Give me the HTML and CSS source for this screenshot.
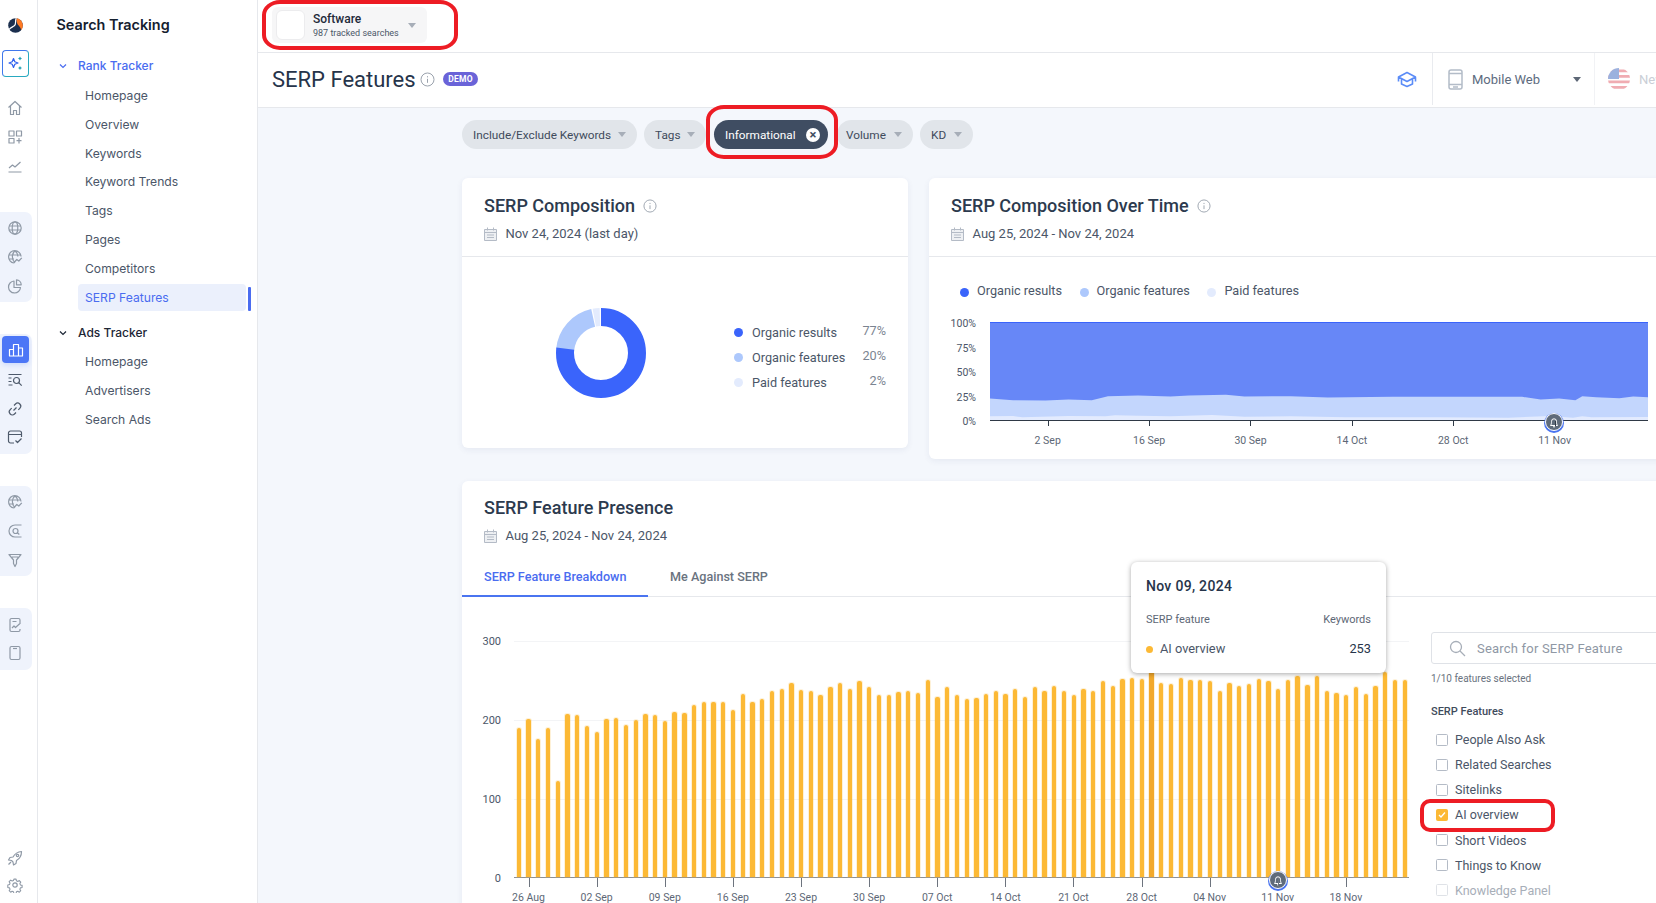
FILE: index.html
```html
<!DOCTYPE html>
<html lang="en">
<head>
    <meta charset="UTF-8">
    <meta name="viewport" content="width=device-width, initial-scale=1.0">
    <title>SERP Features</title>
    <link rel="stylesheet" href="styles.css">
</head>
<body>
    <aside class="rail">
        <div class="rail-logo">
            <svg width="15" height="15" viewBox="0 0 15 15"><circle cx="7.500" cy="7.500" r="7.300" fill="#1b2f4e"/><path d="M8.500 .3A7.300 7.300 0 0 1 13 12.300C13 9 10.500 8 9.500 6 8.800 4.500 8.300 2.500 8.500 .3z" fill="#ff7a24"/><path d="M8.200 .3C6.500 4 9 6 6 8 4.500 9 2 10 1.100 11.500" fill="none" stroke="#fff" stroke-width="1.200"/></svg>
        </div>
        <div class="rail-ai">
            <svg width="17" height="17" viewBox="0 0 17 17"><path d="M6.500 3.500l1.300 3.200 3.200 1.300-3.200 1.300-1.300 3.200-1.300-3.200L2 8l3.200-1.300z" fill="none" stroke="#2f62ee" stroke-width="1.200" stroke-linejoin="round"/><path d="M13 1.500l.7 1.300 1.300.7-1.300.7-.7 1.300-.7-1.300-1.300-.7 1.300-.7zM13 11l.7 1.300 1.300.7-1.300.7-.7 1.300-.7-1.300-1.300-.7 1.300-.7z" fill="#1f9fb4"/></svg>
        </div>
        <div class="rail-plain">
            <div class="rail-item"><svg class="rail-icon" viewBox="0 0 16 16"><path d="M1.500 7.500L8 1.500l6.500 6M3.500 6v8.500h3v-4h3v4h3V6"/></svg></div>
            <div class="rail-item"><svg class="rail-icon" viewBox="0 0 16 16"><path d="M2 2h5v5H2zM9.500 2h5v5h-5zM2 9.500h5v4.500H2zM12 9v5.500M9.500 11.700h5"/></svg></div>
            <div class="rail-item"><svg class="rail-icon" viewBox="0 0 16 16"><path d="M2 10l3.500-3 2.500 2 5.500-5M1.500 14h13"/></svg></div>
        </div>
        <div class="rail-group rail-group-first">
            <div class="rail-item"><svg class="rail-icon" viewBox="0 0 16 16"><circle cx="8" cy="8" r="6.200"/><ellipse cx="8" cy="8" rx="2.800" ry="6.200"/><path d="M2 6h12M2 10h12"/></svg></div>
            <div class="rail-item"><svg class="rail-icon" viewBox="0 0 16 16"><path d="M14 7.500A6.200 6.200 0 1 0 7 14M2 6h12M2 10h5M8 1.800c-3.500 3-3.500 9 0 12.200M8 1.800c2 1.800 2.800 4 2.800 5.700M7.500 13l2.300-2.500 2 1.500 3-3.200"/></svg></div>
            <div class="rail-item"><svg class="rail-icon" viewBox="0 0 16 16"><path d="M7 3a6 6 0 1 0 6.500 6.500H7zM9.500 1.800a5 5 0 0 1 4.700 5H9.500z"/></svg></div>
        </div>
        <div class="rail-group">
            <div class="rail-item rail-active"><svg class="rail-icon" viewBox="0 0 16 16"><path d="M1.500 14V7.500h4V14M5.500 14V2.500h5V14M10.500 14V6h4v8M1 14h14"/></svg></div>
            <div class="rail-item"><svg class="rail-icon dark" viewBox="0 0 16 16"><path d="M1.500 2.500h13M1.500 6h3M1.500 9.500h3M1.500 13h4"/><circle cx="9.500" cy="8.500" r="3"/><path d="M11.700 10.700l3 3"/></svg></div>
            <div class="rail-item"><svg class="rail-icon dark" viewBox="0 0 16 16"><path d="M6.500 9.500l3-3M7 4.500l1.500-1.500a3 3 0 0 1 4.300 4.300L11.300 8.800M9 11.500l-1.500 1.500a3 3 0 0 1-4.300-4.300l1.500-1.500"/></svg></div>
            <div class="rail-item"><svg class="rail-icon dark" viewBox="0 0 16 16"><path d="M7 14H3.500a2 2 0 0 1-2-2V4a2 2 0 0 1 2-2h9a2 2 0 0 1 2 2v4M1.500 5.500h13M8.500 11.500l2 2 4-4"/></svg></div>
        </div>
        <div class="rail-group">
            <div class="rail-item"><svg class="rail-icon" viewBox="0 0 16 16"><path d="M14 7.500A6.200 6.200 0 1 0 7 14M2 6h12M2 10h5M8 1.800c-3.500 3-3.500 9 0 12.200M8 1.800c2 1.800 2.800 4 2.800 5.700M7.500 13l2.300-2.500 2 1.500 3-3.200"/></svg></div>
            <div class="rail-item"><svg class="rail-icon" viewBox="0 0 16 16"><path d="M14.500 2H8a6 6 0 0 0 0 12h6.500"/><circle cx="8.500" cy="8" r="2.500"/><path d="M10.300 9.800l2 1.700"/></svg></div>
            <div class="rail-item"><svg class="rail-icon" viewBox="0 0 16 16"><path d="M2 2.500h12L9.500 8v3.500L8 14.500 6.500 11.500V8zM5 5h6"/></svg></div>
        </div>
        <div class="rail-group">
            <div class="rail-item"><svg class="rail-icon" viewBox="0 0 16 16"><path d="M13 7V3a1.500 1.500 0 0 0-1.500-1.500h-7A1.500 1.500 0 0 0 3 3v10a1.500 1.500 0 0 0 1.500 1.500h7A1.500 1.500 0 0 0 13 13v-1M5.500 4.500h4M5 11l2-2 1.500 1.500 5-4.500"/></svg></div>
            <div class="rail-item"><svg class="rail-icon" viewBox="0 0 16 16"><rect x="3" y="1.500" width="10" height="13" rx="1.500"/><path d="M6 3.500h4"/></svg></div>
        </div>
        <div class="rail-bottom">
            <div class="rail-item"><svg class="rail-icon" viewBox="0 0 16 16"><path d="M14.500 1.500c-4 .3-6.500 2-8.500 5.500L3 7.500 1.500 10l3 .5 1.500 1.500.5 3L9 13.500l.5-3c3.500-2 5-4.500 5-9zM4 12l-2.500 2.500"/><circle cx="10.500" cy="5.500" r="1.200"/></svg></div>
            <div class="rail-item"><svg class="rail-icon" viewBox="0 0 16 16"><circle cx="8" cy="8" r="2.200"/><path d="M6.800 1.500h2.400l.4 1.900 1.500.7 1.700-1 1.600 1.700-1 1.600.6 1.500 1.900.5v2.300l-1.900.5-.6 1.500 1 1.600-1.600 1.700-1.700-1-1.500.6-.4 1.900H6.800l-.5-1.900-1.500-.6-1.600 1-1.700-1.700 1-1.600-.6-1.500-1.900-.5V7.900l1.900-.5.600-1.500-1-1.600 1.700-1.700 1.600 1 1.500-.7z" transform="translate(.8 .8) scale(.9)"/></svg></div>
        </div>
    </aside>

    <nav class="side-nav">
        <div class="side-title">Search Tracking</div>
        <div class="nav-group nav-group-open">
            <svg class="nav-chevron" width="10" height="10" viewBox="0 0 10 10"><path d="M2 3.500l3 3 3-3"/></svg>
            Rank Tracker
        </div>
        <ul class="nav-list">
            <li>Homepage</li>
            <li>Overview</li>
            <li>Keywords</li>
            <li>Keyword Trends</li>
            <li>Tags</li>
            <li>Pages</li>
            <li>Competitors</li>
            <li class="nav-current">SERP Features</li>
        </ul>
        <div class="nav-group nav-group-ads">
            <svg class="nav-chevron" width="10" height="10" viewBox="0 0 10 10"><path d="M2 3.500l3 3 3-3"/></svg>
            Ads Tracker
        </div>
        <ul class="nav-list">
            <li>Homepage</li>
            <li>Advertisers</li>
            <li>Search Ads</li>
        </ul>
    </nav>

    <main class="main">
        <header class="top-bar">
            <div class="picker">
                <div class="picker-thumb"></div>
                <div class="picker-text">
                    <div class="picker-name">Software</div>
                    <div class="picker-sub">987 tracked searches</div>
                </div>
                <span class="caret caret-picker"></span>
            </div>
        </header>

        <div class="title-bar">
            <h1>SERP Features</h1>
            <svg class="info-icon" width="15" height="15" viewBox="0 0 15 15"><circle cx="7.500" cy="7.500" r="6.500"/><path d="M7.500 6.800v4M7.500 4.200v1.200"/></svg>
            <span class="demo-badge">DEMO</span>
            <div class="title-tools">
                <svg class="cap-icon" width="20" height="20" viewBox="0 0 20 20"><path d="M10 3.500L1.500 8l8.500 4.500L18.500 8zM4.500 10v5l5.500 2.500 5.500-2.500v-5M1.500 8v4.500M18.500 8v4.500"/></svg>
                <div class="tool-cell device-cell">
                    <svg class="phone-icon" width="15" height="21" viewBox="0 0 15 21"><rect x="1" y="1" width="13" height="19" rx="2"/><path d="M1 4.500h13M1 15.500h13M5 18h5"/></svg>
                    <span class="device-name">Mobile Web</span>
                    <span class="caret caret-device"></span>
                </div>
                <div class="tool-cell country-cell">
                    <svg class="flag" width="22" height="22" viewBox="0 0 22 22"><defs><clipPath id="flag-clip"><circle cx="11" cy="11" r="11"/></clipPath></defs><g clip-path="url(#flag-clip)"><rect width="22" height="22" fill="#fff"/><path d="M0 1.500h22v2.800H0zM0 7h22v2.800H0zM0 12.500h22v2.800H0zM0 18h22v2.800H0z" fill="#e56a75"/><rect width="11" height="11" fill="#4d72c4"/></g></svg>
                    <span class="country-name">New York</span>
                </div>
            </div>
        </div>

        <div class="content">
            <div class="filters">
                <button class="pill pill-include">Include/Exclude Keywords<span class="caret"></span></button>
                <button class="pill pill-tags">Tags<span class="caret"></span></button>
                <button class="pill pill-active">Informational<span class="pill-close">×</span></button>
                <button class="pill pill-volume">Volume<span class="caret"></span></button>
                <button class="pill pill-kd">KD<span class="caret"></span></button>
            </div>

            <div class="card-row">
                <section class="card card-donut">
                    <div class="card-head">
                        <h2>SERP Composition <svg class="info-icon" width="14" height="14" viewBox="0 0 15 15"><circle cx="7.500" cy="7.500" r="6.500"/><path d="M7.500 6.800v4M7.500 4.200v1.200"/></svg></h2>
                        <div class="card-date">
                            <svg class="cal-icon" width="13" height="14" viewBox="0 0 13 14"><path d="M.5 2.500h12v11H.5zM.5 5.500h12M3.500 .5v3M9.500 .5v3M3 8h7M3 10.500h7"/></svg>
                            Nov 24, 2024 (last day)
                        </div>
                    </div>
                    <div class="donut-body">
                        <svg class="donut" width="92" height="92" viewBox="0 0 92 92">
                            <circle class="ring ring-paid" cx="46" cy="46" r="36" pathLength="100" stroke-dasharray="2.500 97.500" stroke-dashoffset="3"/>
                            <circle class="ring ring-features" cx="46" cy="46" r="36" pathLength="100" stroke-dasharray="20 80" stroke-dashoffset="23.500"/>
                            <circle class="ring ring-organic" cx="46" cy="46" r="36" pathLength="100" stroke-dasharray="77 23" stroke-dashoffset="100"/>
                        </svg>
                        <div class="donut-legend">
                            <span class="dot dot-organic"></span><span>Organic results</span><span class="pct">77%</span>
                            <span class="dot dot-features"></span><span>Organic features</span><span class="pct">20%</span>
                            <span class="dot dot-paid"></span><span>Paid features</span><span class="pct">2%</span>
                        </div>
                    </div>
                </section>

                <section class="card card-time">
                    <div class="card-head">
                        <h2>SERP Composition Over Time <svg class="info-icon" width="14" height="14" viewBox="0 0 15 15"><circle cx="7.500" cy="7.500" r="6.500"/><path d="M7.500 6.800v4M7.500 4.200v1.200"/></svg></h2>
                        <div class="card-date">
                            <svg class="cal-icon" width="13" height="14" viewBox="0 0 13 14"><path d="M.5 2.500h12v11H.5zM.5 5.500h12M3.500 .5v3M9.500 .5v3M3 8h7M3 10.500h7"/></svg>
                            Aug 25, 2024 - Nov 24, 2024
                        </div>
                    </div>
                    <div class="time-legend">
                        <span class="legend-item"><span class="dot dot-organic"></span>Organic results</span>
                        <span class="legend-item"><span class="dot dot-features"></span>Organic features</span>
                        <span class="legend-item"><span class="dot dot-paid"></span>Paid features</span>
                    </div>
                    <div class="area-chart">
                        <div class="area-y"><span>100%</span><span>75%</span><span>50%</span><span>25%</span><span>0%</span></div>
                        <div class="area-plot">
                            <svg class="area-svg" viewBox="130 427 1422 293" preserveAspectRatio="none">
                                <rect x="130" y="427" width="1422" height="293" fill="#6787f7"/>
                                <path fill="#c3d6fd" d="M130 655L180 660 250 661 300 658 350 660 385 648 450 646 520 649 560 646 640 644 680 649 780 648 860 652 1000 650 1170 650 1280 650 1320 658 1360 655 1395 660 1410 648 1440 651 1490 654 1520 649 1552 651V720H130z"/>
                                <path fill="#e3ebfe" d="M130 709L180 708 200 712 300 708 380 709 400 706 450 707 520 709 610 705 680 710 780 709 900 712 1100 712 1250 713 1340 708 1390 713 1410 709 1430 712 1552 711V720H130z"/>
                            </svg>
                            <div class="bell-marker bell-area">
                                <svg width="12" height="12" viewBox="0 0 12 12"><path d="M2.500 9.500c.8-1 1-2.200 1-4.200a2.500 2.500 0 0 1 5 0c0 2 .2 3.200 1 4.200zM5 10.800h2"/></svg>
                            </div>
                        </div>
                        <div class="area-x"><span>2 Sep</span><span>16 Sep</span><span>30 Sep</span><span>14 Oct</span><span>28 Oct</span><span>11 Nov</span></div>
                    </div>
                </section>
            </div>

            <section class="card card-presence">
                <div class="card-head card-head-flat">
                    <h2>SERP Feature Presence</h2>
                    <div class="card-date">
                        <svg class="cal-icon" width="13" height="14" viewBox="0 0 13 14"><path d="M.5 2.500h12v11H.5zM.5 5.500h12M3.500 .5v3M9.500 .5v3M3 8h7M3 10.500h7"/></svg>
                        Aug 25, 2024 - Nov 24, 2024
                    </div>
                </div>
                <div class="tabs">
                    <div class="tab tab-current">SERP Feature Breakdown</div>
                    <div class="tab">Me Against SERP</div>
                </div>
                <div class="presence-body">
                    <div class="bar-chart">
                        <div class="bar-y"><span>300</span><span>200</span><span>100</span><span>0</span></div>
                        <div class="bar-plot">
                            <div class="bars" id="bars"></div>
                            <div class="bell-marker bell-bars">
                                <svg width="12" height="12" viewBox="0 0 12 12"><path d="M2.500 9.500c.8-1 1-2.200 1-4.200a2.500 2.500 0 0 1 5 0c0 2 .2 3.200 1 4.200zM5 10.800h2"/></svg>
                            </div>
                            <div class="tooltip">
                                <div class="tooltip-date">Nov 09, 2024</div>
                                <div class="tooltip-head"><span>SERP feature</span><span>Keywords</span></div>
                                <div class="tooltip-row">
                                    <span class="tooltip-name"><span class="dot dot-amber"></span>AI overview</span>
                                    <span class="tooltip-value">253</span>
                                </div>
                            </div>
                            <div class="bar-x" id="barLabels"></div>
                        </div>
                    </div>

                    <div class="feature-panel">
                        <div class="feature-search">
                            <svg width="17" height="17" viewBox="0 0 17 17"><circle cx="7" cy="7" r="5.500"/><path d="M11 11l5 5"/></svg>
                            Search for SERP Feature
                        </div>
                        <div class="feature-count">1/10 features selected</div>
                        <div class="feature-title">SERP Features</div>
                        <ul class="feature-list">
                            <li><span class="check"></span>People Also Ask</li>
                            <li><span class="check"></span>Related Searches</li>
                            <li><span class="check"></span>Sitelinks</li>
                            <li><span class="check check-on"><svg width="10" height="10" viewBox="0 0 10 10"><path d="M2 5l2 2 4-4.500"/></svg></span>AI overview</li>
                            <li><span class="check"></span>Short Videos</li>
                            <li><span class="check"></span>Things to Know</li>
                            <li class="feature-faded"><span class="check"></span>Knowledge Panel</li>
                        </ul>
                    </div>
                </div>
            </section>
        </div>
    </main>

    <div class="red-mark mark-picker"></div>
    <div class="red-mark mark-pill"></div>
    <div class="red-mark mark-feature"></div>

    <script src="chart.js"></script>
</body>
</html>
```
FILE: styles.css
```css
* {
    box-sizing: border-box;
}

html,
body {
    height: 903px;
    margin: 0;
    overflow: hidden;
}

body {
    display: flex;
    width: 1656px;
    font-family: Roboto, "Liberation Sans", sans-serif;
    color: #2c3a4e;
    background-color: #fff;
}

h1,
h2,
ul {
    margin: 0;
    padding: 0;
}

ul {
    list-style: none;
}

/* icon rail */
.rail {
    display: flex;
    flex-direction: column;
    flex: none;
    width: 38px;
    height: 903px;
    padding-top: 16px;
    border-right: 1px solid #e6e8ec;
}

.rail-logo {
    display: flex;
    align-items: center;
    justify-content: center;
    width: 30px;
    height: 18px;
}

.rail-ai {
    display: flex;
    align-items: center;
    justify-content: center;
    width: 27px;
    height: 27px;
    margin: 16px 0 0 2px;
    border: 1px solid #3f78ec;
    border-right-color: #29a9c0;
    border-bottom-color: #29a9c0;
    border-radius: 4px;
}

.rail-plain {
    margin-top: 17px;
}

.rail-group {
    width: 32px;
    margin-top: 32px;
    padding: 2px 0;
    border-radius: 0 7px 7px 0;
    background-color: #eff3fc;
}

.rail-group-first {
    margin-top: 31.600px;
}

.rail-bottom {
    margin-top: auto;
    padding-bottom: 5px;
}

.rail-bottom .rail-item {
    height: 27px;
}

.rail-item {
    display: flex;
    align-items: center;
    justify-content: center;
    width: 30px;
    height: 28.800px;
}

.rail-group .rail-active {
    width: 27px;
    height: 27px;
    margin: 0 0 2px 2px;
    border-radius: 4px;
    background-color: #4c76f6;
    box-shadow: 0 2px 5px rgba(76, 118, 246, 0.2);
}

.rail-icon {
    width: 16px;
    height: 16px;
    fill: none;
    stroke: #8f99a6;
    stroke-width: 1.2;
    stroke-linejoin: round;
}

.rail-icon.dark {
    stroke: #4e5a6b;
}

.rail-active .rail-icon {
    stroke: #fff;
}

/* second column */
.side-nav {
    flex: none;
    width: 220px;
    height: 903px;
    padding-left: 20px;
    border-right: 1px solid #e6e8ec;
    font-family: Inter, Roboto, sans-serif;
    font-size: 12.150px;
}

.side-title {
    height: 52px;
    margin-left: -1.500px;
    padding-top: 16px;
    font-size: 14.400px;
    font-weight: 600;
    line-height: 18px;
    color: #15202f;
}

.nav-group {
    display: flex;
    align-items: center;
    gap: 10px;
    height: 27px;
    font-size: 12px;
    font-weight: 500;
    color: #1c2635;
}

.nav-chevron {
    fill: none;
    stroke: #1c2635;
    stroke-width: 1.200;
}

.nav-group-open {
    margin-bottom: 3px;
    color: #4a6cf0;
}

.nav-group-open .nav-chevron {
    stroke: #4a6cf0;
}

.nav-group-ads {
    margin-top: 8.500px;
    margin-bottom: 2px;
}

.nav-list li {
    position: relative;
    width: 168px;
    height: 27px;
    margin: 0 0 1.800px 20px;
    padding-left: 7px;
    border-radius: 4px;
    line-height: 27px;
    color: #4b5668;
}

.nav-list .nav-current {
    background-color: #ebf0fc;
    color: #4a6cf0;
}

.nav-current::after {
    content: "";
    position: absolute;
    top: 3px;
    right: -5px;
    width: 3px;
    height: 24px;
    border-radius: 1px;
    background-color: #4a6cf0;
}

/* main column */
.main {
    flex: none;
    width: 1398px;
    height: 903px;
    overflow: hidden;
}

.top-bar {
    height: 53px;
    padding: 7px 0 0 14px;
    border-bottom: 1px solid #e6e8ec;
}

.picker {
    display: flex;
    align-items: center;
    width: 155px;
    height: 36px;
    padding-left: 4px;
    border-radius: 6px;
    background-color: #f6f6f7;
}

.picker-thumb {
    flex: none;
    width: 29px;
    height: 30px;
    margin-right: 8px;
    border: 1px solid #ececee;
    border-radius: 6px;
    background-color: #fff;
}

.picker-name {
    padding-top: 1px;
    font-size: 12px;
    font-weight: 500;
    line-height: 15px;
    color: #1f2a3a;
}

.picker-sub {
    font-size: 9px;
    line-height: 12px;
    color: #4b5668;
}

.caret {
    display: inline-block;
    width: 0;
    height: 0;
    border-top: 5px solid #a7aeb8;
    border-right: 4.500px solid transparent;
    border-left: 4.500px solid transparent;
}

.caret-picker {
    margin-left: 9px;
}

.title-bar {
    display: flex;
    align-items: center;
    height: 55px;
    padding: 0 0 2px 14px;
    border-bottom: 1px solid #e6e8ec;
}

h1 {
    font-size: 22px;
    font-weight: 400;
    color: #26344a;
}

.info-icon {
    fill: none;
    stroke: #9aa2ad;
    stroke-width: 1;
}

.title-bar .info-icon {
    margin-left: 4px;
}

.demo-badge {
    margin-left: 8px;
    padding: 0 5.500px;
    border-radius: 7px;
    background-color: #6a63d8;
    font-size: 8.500px;
    font-weight: 700;
    line-height: 14px;
    letter-spacing: 0.3px;
    color: #fff;
}

.title-tools {
    display: flex;
    align-items: center;
    height: 100%;
    margin-left: auto;
}

.cap-icon {
    margin-right: 15px;
    fill: none;
    stroke: #5b8cf7;
    stroke-width: 1.600;
    stroke-linejoin: round;
}

.tool-cell {
    display: flex;
    align-items: center;
    height: 52px;
    border-left: 1px solid #e9ebef;
}

.device-cell {
    width: 162px;
    padding-left: 15px;
}

.phone-icon {
    fill: none;
    stroke: #b3bcc8;
    stroke-width: 1.500;
}

.device-name {
    margin-left: 9px;
    font-size: 13px;
    color: #5d6b7e;
}

.caret-device {
    margin-left: 33px;
    border-top-color: #5d6776;
}

.country-cell {
    width: 62px;
    padding-left: 13px;
    white-space: nowrap;
    border-left-color: #f1f2f5;
}

.flag {
    flex: none;
    opacity: 0.55;
}

.country-name {
    margin-left: 9px;
    font-size: 13px;
    color: #c9ced6;
}

.content {
    height: 795px;
    padding: 12px 0 0 204px;
    background-color: #f4f7fc;
}

.filters {
    display: flex;
    gap: 8px;
    height: 29px;
}

.pill {
    display: flex;
    align-items: center;
    justify-content: space-between;
    height: 29px;
    padding: 0 11px;
    border: none;
    border-radius: 15px;
    background-color: #e1e5ea;
    font-family: Roboto, sans-serif;
    font-size: 11.800px;
    color: #3f4b5c;
}

.pill-include {
    width: 175px;
    margin-right: -1px;
}

.pill-tags {
    width: 62px;
}

.pill-active {
    width: 114px;
    padding-right: 8px;
    background-color: #3f4d62;
    color: #fff;
}

.pill-volume {
    width: 76px;
    margin-left: 1px;
    padding-left: 9px;
}

.pill-kd {
    width: 53px;
    margin-left: -1px;
}

.pill-close {
    display: flex;
    align-items: center;
    justify-content: center;
    width: 14px;
    height: 14px;
    border-radius: 50%;
    background-color: #fff;
    font-size: 13px;
    font-weight: 700;
    line-height: 14px;
    color: #3f4d62;
}

.card-row {
    display: flex;
    align-items: flex-start;
    gap: 21px;
    width: 1300px;
    margin-top: 29px;
}

.card {
    flex: none;
    border-radius: 6px;
    background-color: #fff;
    box-shadow: 0 2px 6px rgba(40, 60, 110, 0.07);
}

.card-donut {
    width: 446px;
    height: 270px;
}

.card-time {
    width: 800px;
    height: 281px;
}

.card-presence {
    width: 1300px;
    height: 440px;
    margin-top: 22px;
}

.card-head {
    height: 79px;
    padding: 17px 22px 0;
    border-bottom: 1px solid #e6e8ec;
}

.card-head-flat {
    height: 82px;
    padding-top: 16px;
    border-bottom: none;
}

h2 {
    display: flex;
    align-items: center;
    gap: 8px;
    font-size: 18px;
    font-weight: 500;
    line-height: 22px;
    color: #2c3a4e;
}

.card-date {
    display: flex;
    align-items: center;
    gap: 8.500px;
    margin-top: 8px;
    font-size: 13px;
    line-height: 18px;
    color: #4b5668;
}

.cal-icon {
    fill: #eef0f3;
    stroke: #b4bbc6;
    stroke-width: 1;
}

.donut-body {
    display: flex;
    align-items: center;
    height: 191px;
    padding-left: 93px;
}

.ring {
    fill: none;
    stroke-width: 18;
    transform: rotate(-90deg);
    transform-origin: center;
}

.ring-organic {
    stroke: #3a64fb;
}

.ring-features {
    stroke: #adc8fc;
}

.ring-paid {
    stroke: #e3ebfd;
}

.donut-legend {
    display: grid;
    grid-template-columns: 18.500px 118px 16px;
    grid-auto-rows: 25px;
    align-items: center;
    margin: 10px 0 0 86.500px;
    font-size: 12.700px;
    color: #4b5668;
    white-space: nowrap;
}

.dot {
    display: inline-block;
    flex: none;
    width: 9px;
    height: 9px;
    border-radius: 50%;
}

.dot-organic {
    background-color: #3a64fb;
}

.dot-features {
    background-color: #adc8fc;
}

.dot-paid {
    background-color: #e3ebfd;
}

.dot-amber {
    background-color: #fcb935;
}

.pct {
    margin-top: -4px;
    text-align: right;
    color: #7b8491;
    justify-self: end;
}

.time-legend {
    display: flex;
    gap: 17.500px;
    padding: 25px 0 0 31px;
    font-size: 12.700px;
    line-height: 18px;
    color: #4b5668;
}

.legend-item {
    display: flex;
    align-items: center;
    gap: 8px;
}

.legend-item .dot {
    margin-top: 2px;
}

.area-chart {
    display: grid;
    grid-template-columns: 47px 658px;
    grid-template-rows: 99px auto;
    column-gap: 14px;
    margin-top: 22px;
}

.area-y {
    display: flex;
    flex-direction: column;
    justify-content: space-between;
    height: 110px;
    margin-top: -4px;
    font-size: 10.500px;
    line-height: 12px;
    text-align: right;
    color: #4b5668;
}

.area-plot {
    position: relative;
    border-bottom: 1px solid #2f3946;
}

.area-svg {
    display: block;
    width: 658px;
    height: 98px;
    border-top: 1px solid #3a64fb;
}

.area-x {
    display: flex;
    grid-column: 2;
    margin-left: 7px;
    font-size: 10.500px;
    line-height: 12px;
    color: #5d6776;
}

.area-x span {
    position: relative;
    width: 101.400px;
    padding-top: 14px;
    text-align: center;
}

.area-x span::before {
    content: "";
    position: absolute;
    top: 0;
    left: 50%;
    width: 1px;
    height: 5px;
    background-color: #2f3946;
}

.bell-marker {
    position: absolute;
    display: flex;
    align-items: center;
    justify-content: center;
    width: 18px;
    height: 18px;
    border: 1px solid #fff;
    border-radius: 50%;
    background-color: #5f6b7a;
    box-shadow: 0 1px 0 1px #4a74f0;
}

.bell-marker svg {
    fill: none;
    stroke: #fff;
    stroke-width: 1;
}

.bell-area {
    top: 91px;
    left: 555px;
}

.bell-bars {
    top: 230px;
    left: 755px;
}

/* presence card */
.tabs {
    display: flex;
    height: 34px;
    border-bottom: 1px solid #e6e8ec;
    font-size: 12.600px;
    font-weight: 500;
    color: #6a7380;
}

.tab {
    padding: 5px 22px 0;
    line-height: 18px;
}

.tab-current {
    width: 186px;
    height: 34px;
    white-space: nowrap;
    border-bottom: 2px solid #4a74f0;
    color: #4a6cf0;
}

.presence-body {
    display: flex;
}

.bar-chart {
    display: flex;
    flex: none;
    width: 947px;
    padding-top: 44px;
}

.bar-y {
    display: flex;
    flex-direction: column;
    justify-content: space-between;
    flex: none;
    width: 39px;
    height: 249px;
    margin-top: -5px;
    font-size: 11px;
    line-height: 12px;
    text-align: right;
    color: #4b5668;
}

.bar-plot {
    position: relative;
    width: 895px;
    margin-left: 13px;
}

.bars {
    display: flex;
    align-items: flex-end;
    height: 237px;
    border-bottom: 1px solid #8a8f98;
    background: repeating-linear-gradient(to bottom, #f3f4f6 0, #f3f4f6 1px, transparent 1px, transparent 79px);
}

.bar-cell {
    display: flex;
    flex: 1;
    justify-content: center;
}

.bar {
    width: 4.300px;
    border-radius: 2px 2px 0 0;
    background-color: #fcb935;
    box-shadow: 0 0 0 1px rgba(252, 185, 53, 0.2);
}

.bar-hot {
    background-color: #f2a92c;
}

.bar-x {
    display: flex;
    margin-left: -19.500px;
    font-size: 10.500px;
    line-height: 12px;
    color: #5d6776;
}

.bar-x span {
    position: relative;
    flex: none;
    width: 68.120px;
    padding-top: 14px;
    text-align: center;
}

.bar-x span::before {
    content: "";
    position: absolute;
    top: 0;
    left: 50%;
    width: 1px;
    height: 9px;
    background-color: #6d747e;
}

.tooltip {
    position: absolute;
    top: -79px;
    left: 617px;
    width: 255px;
    height: 111px;
    padding: 14px 15px 0;
    border-radius: 6px;
    background-color: #fff;
    box-shadow: 0 1px 5px rgba(0, 0, 0, 0.35);
}

.tooltip-date {
    font-size: 14px;
    font-weight: 500;
    line-height: 20px;
    letter-spacing: 0.3px;
    color: #26344a;
}

.tooltip-head,
.tooltip-row {
    display: flex;
    justify-content: space-between;
}

.tooltip-head {
    margin-top: 17px;
    font-size: 11px;
    line-height: 14px;
    color: #5d6776;
}

.tooltip-row {
    align-items: center;
    margin-top: 13px;
    font-size: 12.800px;
    line-height: 18px;
    color: #4b5668;
}

.tooltip-name {
    display: flex;
    align-items: center;
    gap: 7px;
}

.tooltip-name .dot {
    width: 7px;
    height: 7px;
}

.tooltip-value {
    color: #26344a;
}

.feature-panel {
    flex: none;
    width: 300px;
    padding: 35px 0 0 22px;
}

.feature-search {
    display: flex;
    align-items: center;
    gap: 11px;
    height: 32px;
    padding-left: 17px;
    border: 1px solid #dfe2e7;
    border-radius: 3px;
    font-size: 13px;
    letter-spacing: 0.2px;
    color: #8f98a5;
}

.feature-search svg {
    fill: none;
    stroke: #a7aeb8;
    stroke-width: 1.300;
}

.feature-count {
    margin-top: 8px;
    font-size: 10px;
    line-height: 13px;
    color: #6a7380;
}

.feature-title {
    margin-top: 20px;
    font-size: 11px;
    font-weight: 500;
    line-height: 14px;
    color: #3f4b5c;
}

.feature-list {
    margin-top: 8px;
}

.feature-list li {
    display: flex;
    align-items: center;
    gap: 7px;
    height: 25.150px;
    padding-left: 5px;
    font-size: 12.500px;
    color: #4b5668;
}

.check {
    display: flex;
    align-items: center;
    justify-content: center;
    width: 12px;
    height: 12px;
    border: 1px solid #b4bbc6;
    border-radius: 1.500px;
}

.check-on {
    border-color: #fcb935;
    background-color: #fcb935;
}

.check-on svg {
    fill: none;
    stroke: #fff;
    stroke-width: 1.300;
}

.feature-list .feature-faded {
    color: #a7aeb8;
}

.feature-faded .check {
    border-color: #dfe2e7;
}

/* red hand-drawn marks on top of the screenshot */
.red-mark {
    position: absolute;
    border: 4px solid #ed1c24;
    border-radius: 18px / 15px;
    pointer-events: none;
}

.mark-picker {
    top: 0;
    left: 262px;
    width: 196px;
    height: 50px;
}

.mark-pill {
    top: 105px;
    left: 706px;
    width: 132px;
    height: 54px;
}

.mark-feature {
    top: 799px;
    left: 1420px;
    width: 135px;
    height: 33px;
    border-radius: 10px;
}
```
FILE: chart.js
```js
// keywords per day, Aug 25 - Nov 24
const barValues = [
    189, 200, 175, 189, 122, 206, 205, 191, 183, 200, 201, 193, 199, 206, 205, 198,
    209, 208, 218, 221, 221, 221, 212, 232, 221, 225, 235, 238, 246, 237, 235, 230,
    240, 246, 238, 248, 240, 231, 230, 234, 235, 233, 250, 228, 241, 230, 225, 227,
    232, 236, 232, 238, 228, 241, 235, 242, 235, 230, 238, 236, 248, 242, 251, 252,
    251, 261, 246, 244, 252, 250, 250, 248, 236, 246, 242, 244, 251, 248, 238, 250,
    254, 243, 255, 236, 233, 230, 241, 232, 242, 259, 249, 249
];
const hotIndex = 65;
const barLabels = [
    '26 Aug', '02 Sep', '09 Sep', '16 Sep', '23 Sep', '30 Sep', '07 Oct',
    '14 Oct', '21 Oct', '28 Oct', '04 Nov', '11 Nov', '18 Nov'
];

const barsEl = document.getElementById('bars');
barValues.forEach(function (value, i) {
    const cell = document.createElement('div');
    cell.className = 'bar-cell';
    const bar = document.createElement('div');
    bar.className = i === hotIndex ? 'bar bar-hot' : 'bar';
    bar.style.height = (value / 300 * 237).toFixed(1) + 'px';
    cell.appendChild(bar);
    barsEl.appendChild(cell);
});

const labelsEl = document.getElementById('barLabels');
barLabels.forEach(function (text) {
    const label = document.createElement('span');
    label.innerText = text;
    labelsEl.appendChild(label);
});
```
